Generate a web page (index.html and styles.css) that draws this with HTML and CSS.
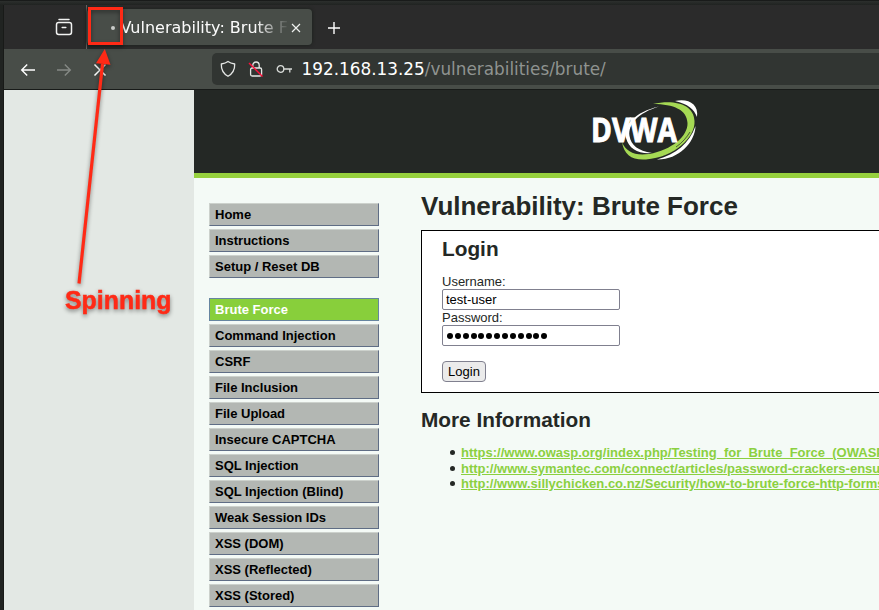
FILE: index.html
```html
<!DOCTYPE html>
<html lang="en">
<head>
<meta charset="utf-8">
<title>Vulnerability: Brute Force</title>
<link rel="stylesheet" href="styles.css">
</head>
<body>
<div class="window">
  <div class="tabbar">
    <div class="tabview">
      <svg width="18" height="18" viewBox="0 0 18 18" fill="none" stroke="#f2f3f2" stroke-width="1.500" stroke-linecap="round"><path d="M4 1.500h10"/><rect x="1.500" y="4.500" width="15" height="12" rx="2.200"/><path d="M7.200 9.500h3.600"/></svg>
    </div>
    <div class="tab">
      <span class="spinner"></span>
      <span class="tab-title">Vulnerability: Brute Force</span>
      <svg class="tab-close" width="10" height="10" viewBox="0 0 10 10" stroke="#eef0ee" stroke-width="1.200"><path d="M1 1l8 8M9 1l-8 8"/></svg>
    </div>
    <svg class="newtab" width="14" height="14" viewBox="0 0 14 14" stroke="#fff" stroke-width="1.400"><path d="M7 1v12M1 7h12"/></svg>
  </div>
  <div class="toolbar">
    <div class="nav">
      <svg width="16" height="14" viewBox="0 0 16 14" fill="none" stroke="#fff" stroke-width="1.400"><path d="M15 7H2M7.200 1.500L1.700 7l5.500 5.500"/></svg>
      <svg width="16" height="14" viewBox="0 0 16 14" fill="none" stroke="#858985" stroke-width="1.400"><path d="M1 7h13M8.800 1.500L14.300 7l-5.500 5.500"/></svg>
      <svg width="14" height="14" viewBox="0 0 14 14" stroke="#fff" stroke-width="1.500"><path d="M1.500 1.500l11 11M12.500 1.500l-11 11"/></svg>
    </div>
    <div class="urlbar">
      <svg width="16" height="18" viewBox="0 0 16 18" fill="none" stroke="#e6e8e6" stroke-width="1.300" stroke-linejoin="round"><path d="M8 1.500C6 3 3.500 3.600 1.300 4c-.2 5.500 2 9.600 6.700 12.300C12.700 13.600 14.900 9.500 14.700 4 12.500 3.600 10 3 8 1.500z"/></svg>
      <svg class="lock" width="16" height="18" viewBox="0 0 16 18" fill="none" stroke="#e6e8e6" stroke-width="1.300"><path d="M4.800 8V5.200a3.200 3.200 0 0 1 6.400 0V8"/><rect x="2.600" y="8" width="11" height="8" rx="1.500"/><path d="M1 3l13.500 13.500" stroke="#ff0f3b" stroke-width="1.500"/></svg>
      <svg class="key" width="17" height="10" viewBox="0 0 17 10" fill="none" stroke="#d9dcd9" stroke-width="1.300"><circle cx="4.500" cy="5" r="3.300"/><path d="M7.800 5H16M13.800 5v3.500"/></svg>
      <span class="url"><b>192.168.13.25</b>/vulnerabilities/brute/</span>
    </div>
  </div>
  <div class="page">
    <div class="container">
      <header>
        <svg class="logo" width="110" height="66" viewBox="0 0 110 66">
          <path d="M61 6C82 1 102 6 102.500 23C103.500 39 83 59 54 61.500C40 62.500 32 57 30 44C34 54 43 58 57 56C80 52 96 38 95.500 25C95 12 82 6 61 6z" fill="#a5d954"/>
          <path d="M83 3C96 0 107 6 105 19C102 11 96 6 83 3zM103.500 28C103 45 86 62 65 61.500C84 56 97 46 103.500 28z" fill="#fff"/>
          <path d="M67 8.500C43 14 31 27 34 40C37 51 46 56 60 55C46 53 39 47 37.500 38C36 26 46 15 67 8.500z" fill="#fff"/>
          <path d="M84 49C90 45 95 39 98 34" fill="none" stroke="#242825" stroke-width=".7"/>
          <text x="-1" y="44" textLength="86" lengthAdjust="spacingAndGlyphs">DVWA</text>
        </svg>
      </header>
      <div class="columns">
        <nav class="menu">
          <ul>
            <li>Home</li><li>Instructions</li><li>Setup / Reset DB</li>
          </ul>
          <ul>
            <li class="selected">Brute Force</li><li>Command Injection</li><li>CSRF</li><li>File Inclusion</li><li>File Upload</li><li>Insecure CAPTCHA</li><li>SQL Injection</li><li>SQL Injection (Blind)</li><li>Weak Session IDs</li><li>XSS (DOM)</li><li>XSS (Reflected)</li><li>XSS (Stored)</li>
          </ul>
        </nav>
        <main>
          <h1>Vulnerability: Brute Force</h1>
          <form class="panel">
            <h2>Login</h2>
            <label for="user">Username:</label>
            <input id="user" type="text" value="test-user">
            <label>Password:</label>
            <div class="field"><i></i><i></i><i></i><i></i><i></i><i></i><i></i><i></i><i></i><i></i><i></i><i></i><i></i></div>
            <button type="button">Login</button>
          </form>
          <h2>More Information</h2>
          <ul class="links">
            <li><a>https://www.owasp.org/index.php/Testing_for_Brute_Force_(OWASP</a></li>
            <li><a>http://www.symantec.com/connect/articles/password-crackers-ensur</a></li>
            <li><a>http://www.sillychicken.co.nz/Security/how-to-brute-force-http-forms</a></li>
          </ul>
        </main>
      </div>
    </div>
  </div>
</div>
<svg class="annotation" width="879" height="610" viewBox="0 0 879 610">
  <rect x="89.500" y="8.500" width="32" height="35" fill="none" stroke="#ff2a16" stroke-width="3"/>
  <path d="M79 283.500L102.500 64" stroke="#ff2a16" stroke-width="3.200"/>
  <path d="M104.800 49L110.500 64.800L96 63.200z" fill="#ff2a16"/>
  <text x="65" y="309" textLength="106.500" lengthAdjust="spacingAndGlyphs">Spinning</text>
</svg>
</body>
</html>
```
FILE: styles.css
```css
* { box-sizing: border-box; }
body { margin: 0; width: 879px; height: 610px; overflow: hidden; background: #232624; font-family: "Liberation Sans", Arial, sans-serif; font-size: 13px; color: #242825; }
.window { height: 610px; padding: 4px 0 0 3px; border-top: 1px solid #191b1a; background: linear-gradient(#2c2f2d, #202321 4px); display: flex; flex-direction: column; overflow: hidden; }
.tabbar { height: 44px; flex: none; display: flex; align-items: center; background: #2b2b2b; border-left: 1px solid #181a18; }
.tabview { width: 83px; height: 44px; padding: 13px 0 0 51px; border-right: 1px solid #646664; }
.tab { width: 225px; height: 36px; background: #484d48; border-radius: 4px; box-shadow: 0 0 3px 1px #202421; display: flex; align-items: center; padding-top: 1px; }
.spinner { width: 4px; height: 4px; border-radius: 50%; background: #c9cbc9; margin: 0 7px 0 24px; flex: none; }
.tab-title { width: 168px; margin-left: -2px; padding: 1px 0 0 .5px; overflow: hidden; white-space: nowrap; font: 16px/22px "DejaVu Sans", sans-serif; color: #fbfbfb; -webkit-mask-image: linear-gradient(90deg, #000 135px, transparent 170px); mask-image: linear-gradient(90deg, #000 135px, transparent 170px); }
.tab-close { margin-left: 3px; }
.newtab { margin: 1px 0 0 15px; }
.toolbar { height: 41px; flex: none; background: #484d48; border-left: 1px solid #181a18; border-bottom: 1px solid #181b19; display: flex; align-items: center; }
.nav { width: 208px; padding: 1px 0 0 16px; display: flex; align-items: center; gap: 20px; }
.nav svg:last-child { margin-left: 1px; }
.urlbar { flex: 1; height: 32px; border-radius: 5px 0 0 5px; background: #313532; display: flex; align-items: center; padding-left: 8px; }
.lock { margin-left: 12px; }
.key { margin-left: 12px; }
.url { margin-left: 8.500px; font: 16.850px/24px "DejaVu Sans", sans-serif; color: #8f9390; }
.url b { font-weight: 400; color: #fff; }
.page { flex: 1; background: #e3e8e4; padding-left: 190px; border-left: 1px solid #181a18; }
.container { height: 521px; background: #f4faf6; }
header { height: 88px; background: #242825; border-bottom: 5px solid #96d03d; padding: 8px 0 0 398px; }
.logo { display: block; overflow: visible; }
.logo text { font: bold 34px "Open Sans", sans-serif; fill: #fff; stroke: #fff; stroke-width: 1px; }
.columns { display: flex; }
.menu { width: 170px; margin: 25px 0 0 15px; flex: none; }
ul { margin: 0; padding: 0; list-style: none; }
.menu ul + ul { margin-top: 20px; }
.menu li { height: 23px; margin-bottom: 3px; padding-left: 5px; font-weight: 700; line-height: 21px; color: #000; background: #b3b7b3; border: 1px solid; border-color: #ccd1cc #5f6d85 #5f6d85 #ccd1cc; }
.menu .selected { color: #fff; background: #88cf3b; border-color: #6685a0; }
main { padding-left: 42px; flex: 1; min-width: 0; overflow: hidden; }
h1 { margin: 13px 0 9px; font-size: 26px; line-height: 30px; }
h2 { margin: 0; font-size: 20.800px; line-height: 24px; }
.panel { height: 163px; margin-bottom: 15px; padding: 6px 20px 0; border: 1px solid #000; border-right: 0; background: #fff; display: flex; flex-direction: column; align-items: flex-start; }
.panel h2 { margin-bottom: 13px; }
label { line-height: 15px; }
input, .field { width: 178px; height: 21px; padding: 0 3px; border: 1px solid #80808f; border-radius: 2px; background: #fff; font: 13px "Liberation Sans", sans-serif; color: #000; }
.field { display: flex; align-items: center; gap: 1.870px; padding-left: 4px; }
.field i { width: 6px; height: 6px; border-radius: 50%; background: #000; }
button { margin-top: 15px; width: 44px; height: 21px; padding: 0; border: 1px solid #80808f; border-radius: 4px; background: #ebebeb; font: 13px "Liberation Sans", sans-serif; color: #000; }
.links { margin-top: 13px; padding-left: 40px; }
.links li { position: relative; height: 15.600px; line-height: 15.600px; white-space: nowrap; }
.links li::before { content: ""; position: absolute; left: -11.500px; top: 5px; width: 5px; height: 5px; border-radius: 50%; background: #242825; }
.links a { font-weight: 700; color: #8bd040; text-decoration: underline; }
.annotation { position: absolute; left: 0; top: 0; filter: drop-shadow(0 2px 2px rgba(0,0,0,.45)); }
.annotation text { font: bold 25px "Liberation Sans", sans-serif; fill: #ff2a16; stroke: #ff2a16; stroke-width: .5px; }
```
